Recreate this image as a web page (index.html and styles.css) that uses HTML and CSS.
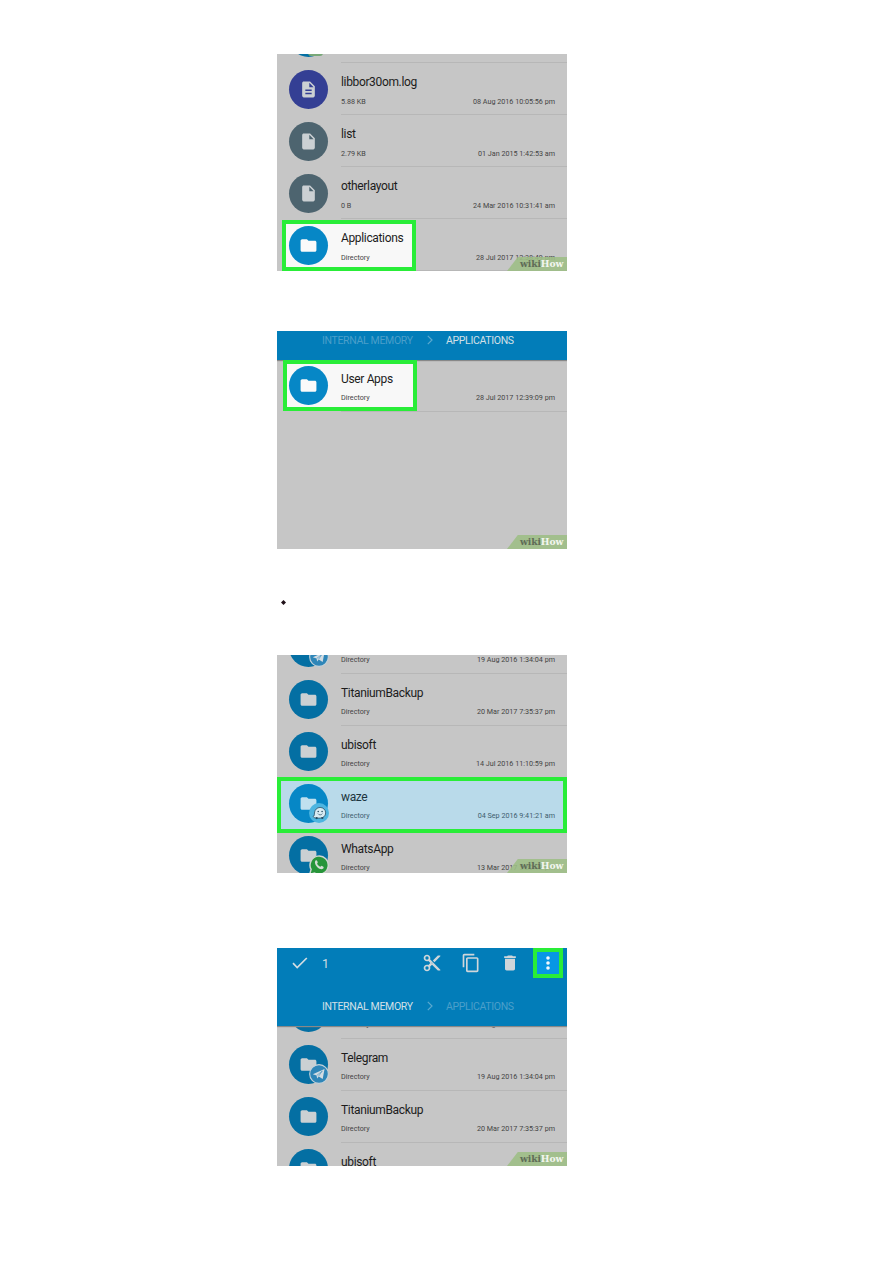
FILE: index.html
```
<!DOCTYPE html>
<html lang="en">
<head>
<meta charset="utf-8">
<title>File manager steps</title>
<link rel="stylesheet" href="styles.css">
</head>
<body>
<svg class="defs" width="0" height="0">
  <symbol id="folder" viewBox="0 0 24 24"><path d="M10 4H4c-1.1 0-2 .9-2 2v12c0 1.1.9 2 2 2h16c1.1 0 2-.9 2-2V8c0-1.100-.9-2-2-2h-8z"/></symbol>
  <symbol id="file" viewBox="0 0 24 24"><path d="M6 2c-1.100 0-2 .9-2 2v16c0 1.100.9 2 2 2h12c1.100 0 2-.9 2-2V8l-6-6zm7 7V3.500L18.500 9z"/></symbol>
  <symbol id="doc" viewBox="0 0 24 24"><path d="M14 2H6c-1.100 0-2 .9-2 2v16c0 1.100.9 2 2 2h12c1.100 0 2-.9 2-2V8zm2 16H8v-2h8zm0-4H8v-2h8zm-3-5V3.500L18.500 9z"/></symbol>
  <symbol id="plane" viewBox="0 0 18 18"><circle cx="9" cy="9" r="8.400" fill="#2f86b8" stroke="#c5d2da" stroke-width="1"/><path d="M3.400 9.200 14 4.500 12.300 13.600 8.800 11.200 7.300 13 6.800 10.400z" fill="#d3dce2"/><path d="M7 10.300 12 6.300 8.600 11" fill="none" stroke="#2f86b8" stroke-width=".5"/></symbol>
  <symbol id="wazeface" viewBox="0 0 18 18"><circle cx="9" cy="9" r="9" fill="#4eb5e0"/><path d="M3.600 12.200c1.300-.5 1.200-1.600 1.300-3.200C5.100 6 7.200 4 10 4s5 2.100 5 4.900-2.200 4.700-5 4.700H7.200c-1.700 0-3-.5-3.600-1.400z" fill="#d8ebf3" stroke="#254b60" stroke-width=".7"/><circle cx="6.900" cy="13.600" r="1" fill="#254b60"/><circle cx="12" cy="13.500" r="1" fill="#254b60"/><circle cx="8.300" cy="7.600" r=".7" fill="#254b60"/><circle cx="11.800" cy="7.600" r=".7" fill="#254b60"/><path d="M8 9.500c.8 1.600 3.300 1.600 4 0" fill="none" stroke="#254b60" stroke-width=".6"/></symbol>
  <symbol id="phone" viewBox="0 0 18 18"><path d="M.6 17.500 1.900 13A8.200 8.200 0 1 1 5 16.200z" fill="#27953a" stroke="#d0d6d0" stroke-width="1.300"/><path d="M6.100 4.800c.5-.3 1-.1 1.200.4l.6 1.300c.1.400-.6 1-.6 1.300.6 1.300 1.600 2.200 2.900 2.700.4 0 .9-.9 1.200-.8l1.500.8c.6.400.2 1.500-.4 1.900-1.400.9-3.500-.1-5.200-1.700C5.500 8.900 4.600 6.200 6.100 4.800z" fill="#d5ddd5"/></symbol>
  <symbol id="chevron" viewBox="0 0 6 10"><path d="M.8.800 5 5 .8 9.200" fill="none" stroke="currentColor" stroke-width="1.200"/></symbol>
</svg>

<main class="page">
  <section class="shot shot-first">
    <div class="list">
      <div class="row"><span class="disc"></span><i class="peek"></i><div class="info"></div></div>
      <div class="row"><span class="disc indigo"><svg><use href="#doc"/></svg></span><div class="info"><b>libbor30om.log</b><p><span>5.88 KB</span><time>08 Aug 2016 10:05:56 pm</time></p></div></div>
      <div class="row"><span class="disc slate"><svg><use href="#file"/></svg></span><div class="info"><b>list</b><p><span>2.79 KB</span><time>01 Jan 2015 1:42:53 am</time></p></div></div>
      <div class="row"><span class="disc slate"><svg><use href="#file"/></svg></span><div class="info"><b>otherlayout</b><p><span>0 B</span><time>24 Mar 2016 10:31:41 am</time></p></div></div>
      <div class="row lit"><div class="mark mark-apps"></div><span class="disc"><svg><use href="#folder"/></svg></span><div class="info"><b>Applications</b><p><span>Directory</span><time>28 Jul 2017 12:38:49 pm</time></p></div></div>
    </div>
    <div class="brand"><span>wiki</span><em>How</em></div>
  </section>

  <section class="shot shot-second">
    <div class="bar"><div class="crumbs"><span class="dim">INTERNAL MEMORY</span><svg class="chev"><use href="#chevron"/></svg><span>APPLICATIONS</span></div></div>
    <div class="list">
      <div class="row lit"><div class="mark mark-user"></div><span class="disc"><svg><use href="#folder"/></svg></span><div class="info"><b>User Apps</b><p><span>Directory</span><time>28 Jul 2017 12:39:09 pm</time></p></div></div>
    </div>
    <div class="brand"><span>wiki</span><em>How</em></div>
  </section>

  <div class="bullet"></div>

  <section class="shot shot-third">
    <div class="list">
      <div class="row"><span class="disc"><svg><use href="#folder"/></svg><svg class="app"><use href="#plane"/></svg></span><div class="info"><b></b><p><span>Directory</span><time>19 Aug 2016 1:34:04 pm</time></p></div></div>
      <div class="row"><span class="disc"><svg><use href="#folder"/></svg></span><div class="info"><b>TitaniumBackup</b><p><span>Directory</span><time>20 Mar 2017 7:35:37 pm</time></p></div></div>
      <div class="row"><span class="disc"><svg><use href="#folder"/></svg></span><div class="info"><b>ubisoft</b><p><span>Directory</span><time>14 Jul 2016 11:10:59 pm</time></p></div></div>
      <div class="row lit waze"><div class="mark mark-waze"></div><span class="disc"><svg><use href="#folder"/></svg><svg class="app"><use href="#wazeface"/></svg></span><div class="info"><b>waze</b><p><span>Directory</span><time>04 Sep 2016 9:41:21 am</time></p></div></div>
      <div class="row"><span class="disc"><svg><use href="#folder"/></svg><svg class="app"><use href="#phone"/></svg></span><div class="info"><b>WhatsApp</b><p><span>Directory</span><time>13 Mar 2017 5:20:18 pm</time></p></div></div>
    </div>
    <div class="brand"><span>wiki</span><em>How</em></div>
  </section>

  <section class="shot shot-fourth">
    <div class="bar tall">
      <div class="tools">
        <svg class="check" viewBox="0 0 16 12"><path d="M1 6.200 5.200 10.500 14.800 1" fill="none" stroke="#d3dde2" stroke-width="1.700"/></svg>
        <span class="count">1</span>
        <svg class="tool cut" viewBox="0 0 24 24"><path d="M9.640 7.640c.23-.5.36-1.050.36-1.640 0-2.210-1.790-4-4-4S2 3.790 2 6s1.790 4 4 4c.59 0 1.140-.13 1.640-.36L10 12l-2.360 2.360C7.140 14.130 6.590 14 6 14c-2.210 0-4 1.790-4 4s1.790 4 4 4 4-1.790 4-4c0-.59-.13-1.140-.36-1.640L12 14l7 7h3v-1zM6 8a2 2 0 1 1 0-4 2 2 0 0 1 0 4zm0 12a2 2 0 1 1 0-4 2 2 0 0 1 0 4zm6-7.500a.5.5 0 1 1 0-1 .5.5 0 0 1 0 1zM19 3l-6 6 2 2 7-7V3z"/></svg>
        <svg class="tool copy" viewBox="0 0 24 24"><path d="M16 1H4c-1.100 0-2 .9-2 2v14h2V3h12zm3 4H8c-1.100 0-2 .9-2 2v14c0 1.100.9 2 2 2h11c1.100 0 2-.9 2-2V7c0-1.100-.9-2-2-2zm0 16H8V7h11z"/></svg>
        <svg class="tool bin" viewBox="0 0 24 24"><path d="M6 19c0 1.100.9 2 2 2h8c1.100 0 2-.9 2-2V7H6zM19 4h-3.500l-1-1h-5l-1 1H5v2h14z"/></svg>
        <div class="more"><svg viewBox="0 0 4 14"><circle cx="2" cy="2" r="1.800"/><circle cx="2" cy="7" r="1.800"/><circle cx="2" cy="12" r="1.800"/></svg></div>
      </div>
      <div class="crumbs"><span>INTERNAL MEMORY</span><svg class="chev"><use href="#chevron"/></svg><span class="dim">APPLICATIONS</span></div>
    </div>
    <div class="list">
      <div class="row"><span class="disc"></span><div class="info"><b></b><p><span>Directory</span><time>23 Aug 2016 11:52:12 am</time></p></div></div>
      <div class="row"><span class="disc"><svg><use href="#folder"/></svg><svg class="app"><use href="#plane"/></svg></span><div class="info"><b>Telegram</b><p><span>Directory</span><time>19 Aug 2016 1:34:04 pm</time></p></div></div>
      <div class="row"><span class="disc"><svg><use href="#folder"/></svg></span><div class="info"><b>TitaniumBackup</b><p><span>Directory</span><time>20 Mar 2017 7:35:37 pm</time></p></div></div>
      <div class="row"><span class="disc"><svg><use href="#folder"/></svg></span><div class="info"><b>ubisoft</b></div></div>
    </div>
    <div class="brand"><span>wiki</span><em>How</em></div>
  </section>
</main>
</body>
</html>
```
FILE: styles.css
```
* { box-sizing: border-box; }
body { margin: 0; background: #fff; font-family: Roboto, "Liberation Sans", sans-serif; }
.defs { position: absolute; }
.page { width: 290px; height: 1263px; margin-left: 277px; padding-top: 54px; }
.shot { position: relative; isolation: isolate; overflow: hidden; height: 218px; background: #c6c6c6; }
.shot-first { height: 217px; margin-bottom: 60px; }
.shot-second { margin-bottom: 51px; }
.shot-third { margin-bottom: 75px; }
.bullet { width: 5px; height: 5px; margin: 0 0 50px 4px; background: #201018; clip-path: polygon(50% 0, 100% 50%, 50% 100%, 0 50%); }

.shot-first .list { margin-top: -43px; }
.shot-first .disc { margin-top: .5px; }
.shot-third .list { margin-top: -33px; }
.shot-fourth .list { margin-top: -39px; }

.row { position: relative; display: flex; height: 52px; padding: 6px 0 0 12px; }
.disc { position: relative; flex: none; display: flex; align-items: center; justify-content: center; width: 39px; height: 39px; border-radius: 50%; background: #046fa3; }
.disc svg { width: 19px; height: 19px; fill: #cbd0d3; }
.disc .app { position: absolute; right: -1px; bottom: 0; width: 20px; height: 20px; }
.indigo { background: #343f94; }
.slate { background: #4d646f; }
.lit .disc { background: #0687c6; }
.lit .disc svg { fill: #fafafa; }
.waze .disc svg { fill: #bfe0ef; }
.peek { position: absolute; left: 31px; top: 42px; width: 15px; height: 3px; background: #78a878; border-radius: 0 0 8px 8px; }

.info { flex: 1; margin: -6px 0 0 13px; border-bottom: 1px solid #b7b7b7; }
.info b { display: block; height: 32px; padding-top: 11px; font-size: 12px; line-height: 16px; font-weight: 400; letter-spacing: -.35px; color: #1c1c1c; white-space: nowrap; }
.info p { display: flex; justify-content: space-between; margin: 0; padding-right: 12px; font-size: 7.200px; line-height: 11px; color: #444; white-space: nowrap; }
.shot-first .info p { padding-top: 1px; }
.waze .info b { color: #1d3540; }
.waze .info p { color: #40606e; }

.mark { position: absolute; border: 4px solid #29ed38; }
.mark::before { content: ""; position: absolute; inset: 0; z-index: -1; background: #f8f8f8; }
.mark-apps { left: 5px; top: 1px; width: 134px; height: 51px; }
.mark-user { left: 6px; top: 0; width: 134px; height: 51px; }
.mark-waze { left: 0; top: -1px; width: 290px; height: 56px; }
.mark-waze::before { background: #b9daea; }

.bar { height: 29px; background: #027db9; box-shadow: 0 1px 1px #888; }
.tall { position: relative; z-index: 1; height: 77.500px; margin-bottom: .5px; }
.crumbs { display: flex; align-items: center; height: 18px; padding-left: 45px; font-size: 10.500px; letter-spacing: -.33px; color: #d3e0e7; white-space: nowrap; }
.crumbs span:first-child { width: 105px; }
.chev { width: 6px; height: 10px; margin-right: 13px; color: #5ba9cf; }
.crumbs .dim { color: #4b9fca; }
.tall .crumbs { margin-top: 19px; }

.tools { display: flex; align-items: center; height: 30px; padding-left: 15px; }
.check { width: 16px; height: 12px; }
.count { width: 100px; margin-left: 14px; font-size: 12.500px; color: #d3dde2; }
.tool { width: 20px; height: 20px; fill: #d0d6da; margin-right: 19px; }
.bin { margin-right: 13px; }
.more { display: flex; align-items: center; justify-content: center; width: 30px; height: 30px; border: 4px solid #29ed38; background: #0797e4; }
.more svg { width: 4px; height: 14px; fill: #f1f8fc; }

.brand { position: absolute; right: 0; bottom: 0; z-index: 2; display: flex; align-items: center; width: 60px; height: 14px; padding-left: 13px; background: rgba(157, 190, 133, .88); clip-path: polygon(18% 0, 100% 0, 100% 100%, 0 100%); font: bold 9.200px/14px "DejaVu Serif", serif; letter-spacing: -.1px; }
.brand span { color: #5f6c57; }
.brand em { font-style: normal; color: #f3f6f0; }
```
